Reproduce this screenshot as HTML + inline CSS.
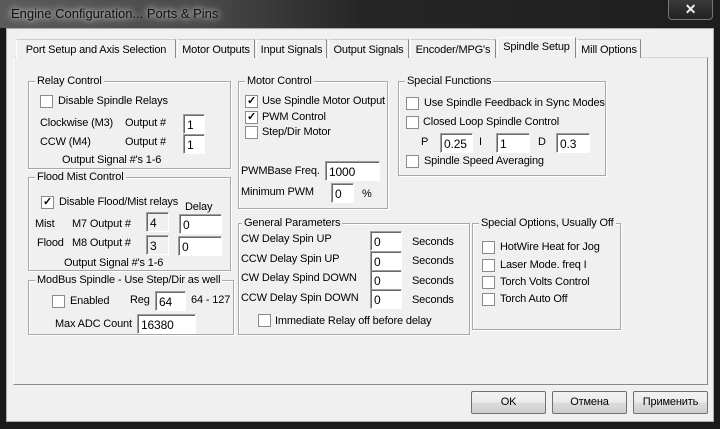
<!DOCTYPE html>
<html><head><meta charset="utf-8"><style>
*{box-sizing:border-box;margin:0;padding:0}
body{width:720px;height:429px;overflow:hidden;background:#1a1a1a;font-family:"Liberation Sans",sans-serif;font-size:11px;letter-spacing:-0.15px;color:#000;position:relative}
.a{position:absolute}
#title{left:0;top:0;width:720px;height:28px;background:linear-gradient(90deg,#5a5a5a 0,#4a4a4a 200px,#262626 360px,#1e1e1e 100%);}
#ttext{left:11px;top:6px;font-size:13px;letter-spacing:0;color:#111;text-shadow:0 0 6px #ddd,0 0 10px #ccc}
#close{left:668px;top:-1px;width:45px;height:21px;border:1px solid #777;border-radius:0 0 4px 4px;background:linear-gradient(#3a3a3a,#222);color:#eee;font-size:14px;font-weight:bold;text-align:center;line-height:18px}
#client{left:6px;top:28px;width:708px;height:394px;background:#f0f0f0;border:1px solid #aaa}
#panel{left:13px;top:57px;width:695px;height:328px;background:#f0f0f0;border:1px solid #fff;border-right-color:#888;border-bottom-color:#888;border-top-color:#d8d8d8;border-left-color:#fff}
.tab{position:absolute;top:39px;height:19px;border:1px solid #ccc;border-bottom:none;border-left-color:#fff;border-right:1px solid #888;background:#f0f0f0;padding:4px 0 0 0;text-align:center;white-space:nowrap}
.grp{position:absolute;border:1px solid #a8a8a8;box-shadow:inset 1px 1px 0 #fff,1px 1px 0 #fff}
.gt{position:absolute;top:-7px;left:6px;background:#f0f0f0;padding:0 2px;white-space:nowrap}
.t{position:absolute;white-space:nowrap;padding-top:1px}
.cb{position:absolute;width:13px;height:13px;background:#fff;border:1px solid #8a8a8a;font-size:11px;line-height:11px;text-align:center;font-weight:bold}
.in{position:absolute;height:20px;background:#fff;border:1px solid #fff;border-top-color:#a0a0a0;border-left-color:#a0a0a0;box-shadow:inset 1px 1px 0 #696969;padding:3px 0 0 3px;white-space:nowrap;font-size:12px}
.in.d{background:#f0f0f0}
.btn{position:absolute;top:391px;width:75px;height:23px;border:1px solid #707070;background:linear-gradient(#f2f2f2,#ebebeb 50%,#dcdcdc 51%,#cfcfcf);text-align:center;line-height:21px;border-radius:2px}
</style></head><body>
<div class="a" id="title"></div>
<div class="a" id="ttext">Engine Configuration... Ports &amp; Pins</div>
<div class="a" id="close">✕</div>
<div class="a" id="client"></div>
<div class="a" id="panel"></div>
<div class="tab" style="left:16px;width:160px">Port Setup and Axis Selection</div>
<div class="tab" style="left:177px;width:78px">Motor Outputs</div>
<div class="tab" style="left:256px;width:71px">Input Signals</div>
<div class="tab" style="left:328px;width:81px">Output Signals</div>
<div class="tab" style="left:410px;width:86px">Encoder/MPG's</div>
<div class="tab" style="left:497px;top:37px;height:21px;width:79px;border-top-color:#fff;z-index:2;padding-top:3px">Spindle Setup</div>
<div class="tab" style="left:577px;width:64px">Mill Options</div>

<div class="grp" style="left:28px;top:81px;width:203px;height:88px"><span class="gt">Relay Control</span></div>
<div class="cb" style="left:40px;top:95px"></div><span class="t" style="left:58px;top:94px">Disable Spindle Relays</span>
<span class="t" style="left:40px;top:116px">Clockwise (M3)</span><span class="t" style="left:125px;top:116px">Output #</span>
<div class="in" style="left:183px;top:114px;width:22px">1</div>
<span class="t" style="left:40px;top:135px">CCW (M4)</span><span class="t" style="left:125px;top:135px">Output #</span>
<div class="in" style="left:183px;top:134px;width:22px">1</div>
<span class="t" style="left:62px;top:153px">Output Signal #'s 1-6</span>

<div class="grp" style="left:28px;top:177px;width:203px;height:94px"><span class="gt">Flood Mist Control</span></div>
<div class="cb" style="left:41px;top:196px">✓</div><span class="t" style="left:59px;top:195px">Disable Flood/Mist relays</span>
<span class="t" style="left:185px;top:200px">Delay</span>
<span class="t" style="left:35px;top:217px">Mist</span><span class="t" style="left:72px;top:217px">M7 Output #</span>
<div class="in d" style="left:146px;top:212px;width:23px">4</div>
<div class="in" style="left:179px;top:214px;width:43px">0</div>
<span class="t" style="left:37px;top:236px">Flood</span><span class="t" style="left:72px;top:236px">M8 Output #</span>
<div class="in d" style="left:146px;top:235px;width:23px">3</div>
<div class="in" style="left:178px;top:236px;width:44px">0</div>
<span class="t" style="left:64px;top:256px">Output Signal #'s 1-6</span>

<div class="grp" style="left:28px;top:280px;width:206px;height:55px"><span class="gt">ModBus Spindle - Use Step/Dir as well</span></div>
<div class="cb" style="left:52px;top:295px"></div><span class="t" style="left:70px;top:294px">Enabled</span>
<span class="t" style="left:130px;top:293px">Reg</span>
<div class="in" style="left:155px;top:291px;width:31px">64</div>
<span class="t" style="left:191px;top:293px">64 - 127</span>
<span class="t" style="left:55px;top:317px">Max ADC Count</span>
<div class="in" style="left:137px;top:314px;width:59px">16380</div>

<div class="grp" style="left:238px;top:81px;width:150px;height:128px"><span class="gt">Motor Control</span></div>
<div class="cb" style="left:245px;top:95px">✓</div><span class="t" style="left:262px;top:94px">Use Spindle Motor Output</span>
<div class="cb" style="left:245px;top:111px">✓</div><span class="t" style="left:262px;top:110px">PWM Control</span>
<div class="cb" style="left:245px;top:126px"></div><span class="t" style="left:262px;top:125px">Step/Dir Motor</span>
<span class="t" style="left:241px;top:164px">PWMBase Freq.</span>
<div class="in" style="left:325px;top:161px;width:55px">1000</div>
<span class="t" style="left:241px;top:185px">Minimum PWM</span>
<div class="in" style="left:331px;top:183px;width:23px">0</div>
<span class="t" style="left:362px;top:187px">%</span>

<div class="grp" style="left:398px;top:81px;width:208px;height:95px"><span class="gt">Special Functions</span></div>
<div class="cb" style="left:406px;top:97px"></div><span class="t" style="left:424px;top:96px">Use Spindle Feedback in Sync Modes</span>
<div class="cb" style="left:406px;top:116px"></div><span class="t" style="left:423px;top:115px">Closed Loop Spindle Control</span>
<span class="t" style="left:421px;top:135px">P</span>
<div class="in" style="left:440px;top:133px;width:33px">0.25</div>
<span class="t" style="left:479px;top:135px">I</span>
<div class="in" style="left:496px;top:133px;width:34px">1</div>
<span class="t" style="left:538px;top:135px">D</span>
<div class="in" style="left:556px;top:133px;width:34px">0.3</div>
<div class="cb" style="left:406px;top:155px"></div><span class="t" style="left:424px;top:154px">Spindle Speed Averaging</span>

<div class="grp" style="left:238px;top:223px;width:232px;height:112px"><span class="gt" style="left:3px">General Parameters</span></div>
<span class="t" style="left:241px;top:232px">CW Delay Spin UP</span>
<span class="t" style="left:241px;top:252px">CCW Delay Spin UP</span>
<span class="t" style="left:241px;top:271px">CW Delay Spind DOWN</span>
<span class="t" style="left:241px;top:291px">CCW Delay Spin DOWN</span>
<div class="in" style="left:370px;top:231px;width:32px">0</div>
<div class="in" style="left:370px;top:251px;width:32px">0</div>
<div class="in" style="left:370px;top:270px;width:32px">0</div>
<div class="in" style="left:370px;top:289px;width:32px">0</div>
<span class="t" style="left:412px;top:235px">Seconds</span>
<span class="t" style="left:412px;top:254px">Seconds</span>
<span class="t" style="left:412px;top:274px">Seconds</span>
<span class="t" style="left:412px;top:293px">Seconds</span>
<div class="cb" style="left:258px;top:314px"></div><span class="t" style="left:275px;top:314px">Immediate Relay off before delay</span>

<div class="grp" style="left:472px;top:223px;width:149px;height:107px"><span class="gt" style="left:6px">Special Options, Usually Off</span></div>
<div class="cb" style="left:482px;top:241px"></div><span class="t" style="left:500px;top:240px">HotWire Heat for Jog</span>
<div class="cb" style="left:482px;top:259px"></div><span class="t" style="left:500px;top:258px">Laser Mode. freq I</span>
<div class="cb" style="left:482px;top:276px"></div><span class="t" style="left:500px;top:275px">Torch Volts Control</span>
<div class="cb" style="left:482px;top:293px"></div><span class="t" style="left:500px;top:292px">Torch Auto Off</span>

<div class="btn" style="left:471px">OK</div>
<div class="btn" style="left:552px">Отмена</div>
<div class="btn" style="left:633px">Применить</div>
</body></html>
